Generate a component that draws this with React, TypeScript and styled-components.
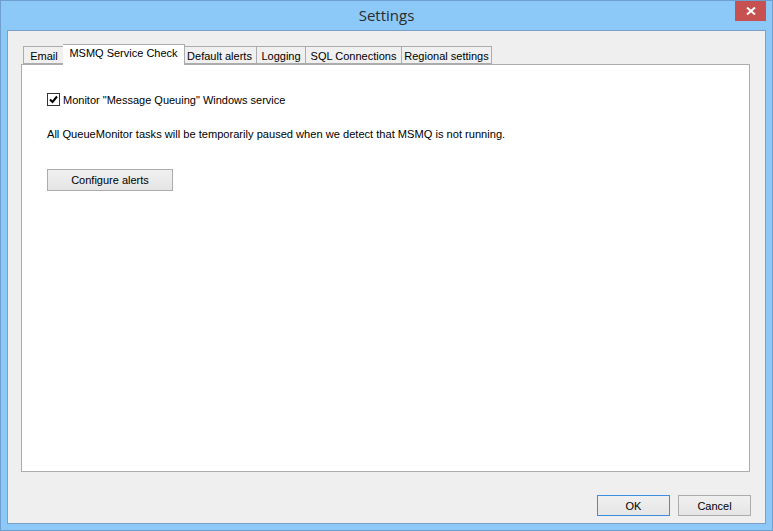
import React from 'react';
import styled, { createGlobalStyle } from 'styled-components';

const Global = createGlobalStyle`
  html, body {
    margin: 0;
    padding: 0;
    background: #8cc8f8;
  }
  body {
    font-family: "Liberation Sans", Arial, sans-serif;
    font-size: 11px;
    color: #000;
  }
`;

const Window = styled.div`
  box-sizing: border-box;
  width: 773px;
  height: 531px;
  background: #8cc8f8;
  border: 1px solid #6f9fcf;
  display: flex;
  flex-direction: column;
`;

const TitleBar = styled.div`
  height: 29px;
  display: flex;
  align-items: center;
  justify-content: center;
  position: relative;
`;

const Title = styled.div`
  font-family: "Open Sans", "Noto Sans", sans-serif;
  font-size: 15px;
  color: #2b2b2b;
  margin-top: -1px;
`;

const CloseButton = styled.div`
  position: absolute;
  top: 0;
  right: 6px;
  width: 31px;
  height: 20px;
  background: #c75050;
  display: flex;
  align-items: center;
  justify-content: center;
`;

const Client = styled.div`
  flex: 1;
  margin: 0 6px 6px 6px;
  border: 1px solid #7c9fc4;
  background: #efefef;
  display: flex;
  flex-direction: column;
  padding: 13px 15px 7px 13px;
`;

const TabStrip = styled.div`
  display: flex;
  align-items: flex-end;
  height: 20px;
  padding-left: 2px;
  position: relative;
  z-index: 1;
`;

const Tab = styled.div<{ $active?: boolean; $width: number }>`
  box-sizing: border-box;
  flex: none;
  width: ${p => p.$width + (p.$active ? 4 : 0)}px;
  height: ${p => (p.$active ? '21px' : '18px')};
  margin: ${p => (p.$active ? '0 -2px -1px -2px' : '0')};
  padding-top: ${p => (p.$active ? '2px' : '1px')};
  border: 1px solid #acacac;
  border-bottom: ${p => (p.$active ? 'none' : '1px solid #acacac')};
  background: ${p => (p.$active ? '#ffffff' : '#f0f0f0')};
  display: flex;
  justify-content: center;
  align-items: ${p => (p.$active ? 'flex-start' : 'center')};
  white-space: nowrap;
  color: #000;
  position: relative;
  z-index: ${p => (p.$active ? 2 : 0)};
  & + & {
    border-left: none;
  }
`;

const Panel = styled.div`
  flex: 1;
  border: 1px solid #acacac;
  background: #fff;
  padding: 28px 25px;
  display: flex;
  flex-direction: column;
  align-items: flex-start;
`;

const CheckRow = styled.label`
  display: flex;
  align-items: center;
  gap: 3px;
  color: #000;
`;

const CheckBox = styled.span`
  box-sizing: border-box;
  width: 13px;
  height: 13px;
  border: 1px solid #333;
  background: #fff;
  display: flex;
  align-items: center;
  justify-content: center;
`;

const Note = styled.p`
  margin: 22px 0 0 0;
  font-size: 11.1px;
`;

const Button = styled.button<{ $default?: boolean }>`
  box-sizing: border-box;
  font-family: "Liberation Sans", Arial, sans-serif;
  font-size: 11px;
  color: #000;
  border: 1px solid ${p => (p.$default ? '#3c8fe0' : '#acacac')};
  background: linear-gradient(#f0f0f0, #e5e5e5);
  padding: 0;
  border-radius: 0;
`;

const WideButton = styled(Button)`
  width: 126px;
  height: 22px;
  margin-top: 29px;
`;

const Footer = styled.div`
  display: flex;
  justify-content: flex-end;
  gap: 8px;
  padding-top: 23px;
  margin-right: -1px;
`;

const DialogButton = styled(Button)`
  width: 73px;
  height: 21px;
`;

const tabs = [
  { label: 'Email', width: 42 },
  { label: 'MSMQ Service Check', width: 118, active: true },
  { label: 'Default alerts', width: 74 },
  { label: 'Logging', width: 49 },
  { label: 'SQL Connections', width: 96 },
  { label: 'Regional settings', width: 90 },
];

export default function App() {
  return (
    <>
      <Global />
      <Window>
        <TitleBar>
          <Title>Settings</Title>
          <CloseButton>
            <svg width="10" height="8" viewBox="0 0 10 8">
              <path d="M1 0.5 L9 7.5 M9 0.5 L1 7.5" stroke="#fff" strokeWidth="2" />
            </svg>
          </CloseButton>
        </TitleBar>
        <Client>
          <TabStrip>
            {tabs.map(t => (
              <Tab key={t.label} $width={t.width} $active={t.active}>
                {t.label}
              </Tab>
            ))}
          </TabStrip>
          <Panel>
            <CheckRow>
              <CheckBox>
                <svg width="9" height="9" viewBox="0 0 9 9">
                  <path d="M1 4.5 L3.5 7 L8 1.5" stroke="#000" strokeWidth="2" fill="none" />
                </svg>
              </CheckBox>
              Monitor "Message Queuing" Windows service
            </CheckRow>
            <Note>All QueueMonitor tasks will be temporarily paused when we detect that MSMQ is not running.</Note>
            <WideButton>Configure alerts</WideButton>
          </Panel>
          <Footer>
            <DialogButton $default>OK</DialogButton>
            <DialogButton>Cancel</DialogButton>
          </Footer>
        </Client>
      </Window>
    </>
  );
}
